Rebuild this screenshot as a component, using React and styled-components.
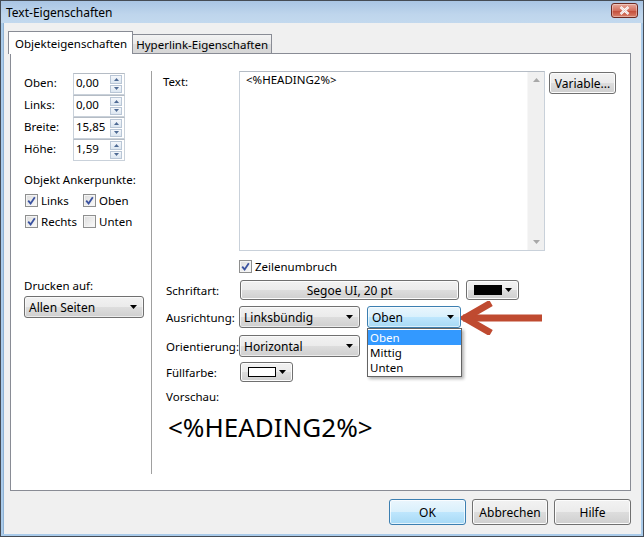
import React from 'react';
import styled, { createGlobalStyle, css } from 'styled-components';

const Global = createGlobalStyle`
  html, body { margin: 0; padding: 0; background: #fff; overflow: hidden; }
  body { font-family: "Noto Sans", "Open Sans", sans-serif; font-size: 11.5px; color: #000; }
  * { box-sizing: border-box; }
`;

const Window = styled.div`
  width: 644px;
  height: 537px;
  display: flex;
  flex-direction: column;
  border: 1px solid #454c55;
  background: #aacbea;
  padding: 0 2px 2px;
`;

const TitleBar = styled.div`
  height: 22px;
  margin: 0 -2px;
  padding: 0 5px 0 5px;
  display: flex;
  align-items: center;
  justify-content: space-between;
  background: linear-gradient(#a9c5e4, #bed5ec 60%, #c3d9ee);
  font-size: 12px;
`;

const CloseBtn = styled.div`
  width: 27px;
  height: 15px;
  margin-top: -3px;
  border: 1px solid #6d2a22;
  border-radius: 3px;
  background: linear-gradient(#e6a89b, #d3705f 50%, #c24a37 51%, #d9826d);
  display: flex;
  align-items: center;
  justify-content: center;
  box-shadow: inset 0 0 0 1px rgba(255,255,255,0.35);
`;

const Client = styled.div`
  flex: 1;
  background: #f0f0f0;
  padding: 8px 10px 0 6px;
  display: flex;
  flex-direction: column;
  border-left: 1px solid #8fb2d4;
`;

const TabRow = styled.div`
  display: flex;
  align-items: flex-end;
  margin-left: -2px;
  margin-bottom: -1px;
  position: relative;
  z-index: 1;
`;

const Tab = styled.div`
  border: 1px solid #898c95;
  border-bottom: none;
  display: flex;
  align-items: center;
  font-size: 11.5px;
  white-space: nowrap;
  ${(p) => p.$active ? css`
    height: 23px;
    background: #fff;
    padding: 0 5px 0 6px;
  ` : css`
    height: 20px;
    border-left: none;
    border-bottom: 1px solid #898c95;
    background: linear-gradient(#f3f3f3, #e9e9e9 50%, #dcdcdc 51%, #d6d6d6);
    padding: 0 3px 0 3px;
  `}
`;

const Panel = styled.div`
  height: 438px;
  background: #fff;
  border: 1px solid #898c95;
  display: flex;
`;

const LeftCol = styled.div`
  width: 140px;
  padding: 19px 0 0 13px;
  display: flex;
  flex-direction: column;
`;

const SpinRow = styled.div`
  display: flex;
  align-items: center;
  height: 22px;
  & > span { margin-top: -3px; }
`;

const FieldLabel = styled.span`
  width: ${(p) => p.$w || 49}px;
  padding-left: ${(p) => p.$pad || 0}px;
  flex-shrink: 0;
  white-space: nowrap;
`;

const SpinBox = styled.div`
  width: 52px;
  height: 22px;
  border: 1px solid #c9d1da;
  border-top-color: #b5bcc5;
  display: flex;
  align-items: center;
  justify-content: space-between;
  padding: 0 2px 0 2px;
  & > span { margin-top: -3px; }
`;

const SpinBtns = styled.div`
  width: 12px;
  height: 18px;
  display: flex;
  flex-direction: column;
  gap: 1px;
`;

const SpinHalf = styled.div`
  flex: 1;
  border: 1px solid #b9c6d6;
  background: linear-gradient(#f4f7fb, #dce6f1);
  display: flex;
  align-items: center;
  justify-content: center;
`;

const Tri = ({ dir = 'down', color = '#4e6a94', w = 5, h = 3 }) => (
  <svg width={w} height={h} viewBox={`0 0 ${w} ${h}`}>
    <polygon
      points={dir === 'up' ? `0,${h} ${w},${h} ${w / 2},0` : `0,0 ${w},0 ${w / 2},${h}`}
      fill={color}
    />
  </svg>
);

const Section = styled.div`
  margin-top: ${(p) => p.$mt || 0}px;
  white-space: nowrap;
`;

const CheckGrid = styled.div`
  display: grid;
  grid-template-columns: 58px auto;
  row-gap: 8px;
  margin-top: 7px;
  padding-left: 1px;
`;

const CheckItem = styled.label`
  display: flex;
  align-items: center;
  gap: 3px;
  height: 13px;
`;

const Box = styled.span`
  width: 13px;
  height: 13px;
  border: 1px solid #8e8f8f;
  background: linear-gradient(135deg, #dcdcdc, #fbfbfb);
  box-shadow: inset 0 0 0 1px #f4f4f4;
  display: flex;
  align-items: center;
  justify-content: center;
  flex-shrink: 0;
`;

const Check = ({ on, children }) => (
  <CheckItem>
    <Box>
      {on && (
        <svg width="9" height="9" viewBox="0 0 9 9">
          <path d="M1.2 4.6 L3.6 7.4 L7.8 1.2" stroke="#3a52a0" strokeWidth="1.8" fill="none" />
        </svg>
      )}
    </Box>
    {children}
  </CheckItem>
);

const Select = styled.div`
  position: relative;
  width: ${(p) => p.$w}px;
  height: 22px;
  flex-shrink: 0;
  border: 1px solid ${(p) => (p.$focus ? '#3c7fb1' : '#707070')};
  border-radius: 3px;
  background: ${(p) =>
    p.$focus
      ? 'linear-gradient(#e9f6fd, #d9f0fc 50%, #bee6fd 51%, #a7d9f5)'
      : 'linear-gradient(#f2f2f2, #ebebeb 50%, #dddddd 51%, #cfcfcf)'};
  box-shadow: inset 0 0 0 1px rgba(255,255,255,0.6);
  display: flex;
  align-items: center;
  justify-content: space-between;
  padding: 0 6px 0 4px;
  font-size: 12px;
  white-space: nowrap;
`;

const RightCol = styled.div`
  flex: 1;
  margin: 17px 0 16px;
  border-left: 1px solid #a0a0a0;
  padding-left: 11px;
  display: flex;
  flex-direction: column;
  position: relative;
`;

const Row = styled.div`
  display: flex;
  align-items: ${(p) => p.$top ? 'flex-start' : 'center'};
  margin-top: ${(p) => p.$mt || 0}px;
`;

const TextArea = styled.div`
  width: 306px;
  height: 180px;
  border: 1px solid #c9d1da;
  border-top-color: #b5bcc5;
  display: flex;
`;

const TextContent = styled.div`
  flex: 1;
  padding: 0 6px;
  font-size: 11.5px;
`;

const ScrollBar = styled.div`
  width: 17px;
  background: #f0f0f0;
  display: flex;
  flex-direction: column;
  justify-content: space-between;
  align-items: center;
  padding: 6px 0 6px;
  border-left: 1px solid #f7f7f7;
`;

const Button = styled.div`
  width: ${(p) => p.$w}px;
  height: ${(p) => p.$h || 22}px;
  margin-left: ${(p) => p.$ml || 0}px;
  flex-shrink: 0;
  border: 1px solid ${(p) => (p.$default ? '#3c7fb1' : '#707070')};
  border-radius: 3px;
  background: ${(p) =>
    p.$default
      ? 'linear-gradient(#eaf6fd, #d9f0fc 50%, #bee6fd 51%, #a7d9f5)'
      : 'linear-gradient(#f2f2f2, #ebebeb 50%, #dddddd 51%, #cfcfcf)'};
  box-shadow: inset 0 0 0 1px ${(p) => (p.$default ? 'rgba(255,255,255,0.7)' : '#fcfcfc')};
  display: flex;
  align-items: center;
  justify-content: center;
  gap: 3px;
  font-size: 12px;
  white-space: nowrap;
`;

const Swatch = styled.span`
  width: 28px;
  height: 10px;
  background: ${(p) => p.$color};
  border: 1px solid #000;
`;

const DropList = styled.div`
  position: absolute;
  top: 21px;
  left: -1px;
  width: 95px;
  border: 1px solid #646464;
  background: #fff;
  box-shadow: 2px 2px 3px rgba(0,0,0,0.3);
  padding: 1px 0;
  z-index: 5;
`;

const DropItem = styled.div`
  height: 15px;
  line-height: 15px;
  overflow: hidden;
  padding-left: 2px;
  font-size: 11.5px;
  color: ${(p) => (p.$sel ? '#fff' : '#000')};
  background: ${(p) => (p.$sel ? '#3399ff' : 'transparent')};
`;

const Preview = styled.div`
  margin-top: 7px;
  padding-left: 5px;
  font-size: 26px;
  line-height: 32px;
`;

const Pointer = styled.svg`
  position: absolute;
  left: 309px;
  top: 230px;
  z-index: 6;
`;

const Footer = styled.div`
  display: flex;
  justify-content: flex-end;
  gap: 6px;
  padding-top: 8px;
`;

export default function App() {
  const spins = [
    ['Oben:', '0,00'],
    ['Links:', '0,00'],
    ['Breite:', '15,85'],
    ['Höhe:', '1,59'],
  ];
  return (
    <>
      <Global />
      <Window>
        <TitleBar>
          <span>Text-Eigenschaften</span>
          <CloseBtn>
            <svg width="11" height="9" viewBox="0 0 11 9">
              <path d="M1.5 1 L9.5 8 M9.5 1 L1.5 8" stroke="#fff" strokeWidth="2.4" />
              <path d="M1.5 1 L9.5 8 M9.5 1 L1.5 8" stroke="#7a2a20" strokeWidth="0.5" opacity="0.4" />
            </svg>
          </CloseBtn>
        </TitleBar>
        <Client>
          <TabRow>
            <Tab $active>Objekteigenschaften</Tab>
            <Tab>Hyperlink-Eigenschaften</Tab>
          </TabRow>
          <Panel>
            <LeftCol>
              {spins.map(([l, v]) => (
                <SpinRow key={l}>
                  <FieldLabel>{l}</FieldLabel>
                  <SpinBox>
                    <span>{v}</span>
                    <SpinBtns>
                      <SpinHalf><Tri dir="up" /></SpinHalf>
                      <SpinHalf><Tri /></SpinHalf>
                    </SpinBtns>
                  </SpinBox>
                </SpinRow>
              ))}
              <Section $mt={11}>Objekt Ankerpunkte:</Section>
              <CheckGrid>
                <Check on>Links</Check>
                <Check on>Oben</Check>
                <Check on>Rechts</Check>
                <Check>Unten</Check>
              </CheckGrid>
              <Section $mt={50}>Drucken auf:</Section>
              <Select $w={120} style={{ marginTop: 3 }}>
                <span>Allen Seiten</span>
                <Tri color="#000" w={7} h={4} />
              </Select>
            </LeftCol>
            <RightCol>
              <Row $top>
                <FieldLabel $w={76} style={{ paddingTop: 3 }}>Text:</FieldLabel>
                <TextArea>
                  <TextContent>&lt;%HEADING2%&gt;</TextContent>
                  <ScrollBar>
                    <Tri dir="up" color="#a8a8a8" w={7} h={4} />
                    <Tri color="#a8a8a8" w={7} h={4} />
                  </ScrollBar>
                </TextArea>
                <Button $w={67} $ml={4} style={{ marginTop: 1 }}>Variable...</Button>
              </Row>
              <Row $mt={9} style={{ paddingLeft: 76 }}>
                <Check on>Zeilenumbruch</Check>
              </Row>
              <Row $mt={7}>
                <FieldLabel $w={77} $pad={3}>Schriftart:</FieldLabel>
                <Button $w={219} $h={20}>Segoe UI, 20 pt</Button>
                <Button $w={53} $h={20} $ml={7}>
                  <Swatch $color="#000" />
                  <Tri color="#000" w={7} h={4} />
                </Button>
              </Row>
              <Row $mt={6}>
                <FieldLabel $w={76} $pad={3}>Ausrichtung:</FieldLabel>
                <Select $w={121}>
                  <span>Linksbündig</span>
                  <Tri color="#000" w={7} h={4} />
                </Select>
                <Select $w={94} $focus style={{ marginLeft: 7 }}>
                  <span>Oben</span>
                  <Tri color="#000" w={7} h={4} />
                  <DropList>
                    <DropItem $sel>Oben</DropItem>
                    <DropItem>Mittig</DropItem>
                    <DropItem>Unten</DropItem>
                  </DropList>
                </Select>
              </Row>
              <Row $mt={7}>
                <FieldLabel $w={76} $pad={3}>Orientierung:</FieldLabel>
                <Select $w={121}>
                  <span>Horizontal</span>
                  <Tri color="#000" w={7} h={4} />
                </Select>
              </Row>
              <Row $mt={5}>
                <FieldLabel $w={77} $pad={3}>Füllfarbe:</FieldLabel>
                <Button $w={53} $h={20}>
                  <Swatch $color="#fff" />
                  <Tri color="#000" w={7} h={4} />
                </Button>
              </Row>
              <Row $mt={7}>
                <FieldLabel $w={76} $pad={3}>Vorschau:</FieldLabel>
              </Row>
              <Preview>&lt;%HEADING2%&gt;</Preview>
              <Pointer width="82" height="34" viewBox="0 0 82 34">
                <path d="M2 17 H81" stroke="#bf4a30" strokeWidth="7" />
                <path d="M30 2 L4 17 L30 32" stroke="#bf4a30" strokeWidth="7" fill="none" strokeLinejoin="miter" />
              </Pointer>
            </RightCol>
          </Panel>
          <Footer>
            <Button $w={77} $h={26} $default>OK</Button>
            <Button $w={76} $h={26}>Abbrechen</Button>
            <Button $w={77} $h={26}>Hilfe</Button>
          </Footer>
        </Client>
      </Window>
    </>
  );
}
